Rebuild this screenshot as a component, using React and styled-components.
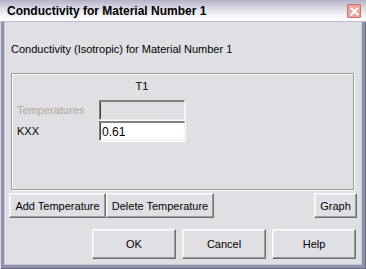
import React from 'react'
import styled, { createGlobalStyle } from 'styled-components'

const GlobalStyle = createGlobalStyle`
  html, body {
    margin: 0;
    padding: 0;
    background: #e0dfe3;
  }
  body {
    font-family: "Liberation Sans", Arial, sans-serif;
    font-size: 11px;
    color: #000;
  }
`

const Window = styled.div`
  width: 366px;
  height: 269px;
  box-sizing: border-box;
  display: flex;
  flex-direction: column;
  background: #9291ad;
  box-shadow: inset 1px 0 0 #d9d8e4, inset -1px -1px 0 #6b6a86;
`

const TitleBar = styled.div`
  height: 22px;
  flex: none;
  display: flex;
  align-items: center;
  justify-content: space-between;
  padding: 0 7px 0 7px;
  box-sizing: border-box;
  background: linear-gradient(#b3b2c8 0%, #d6d6e3 35%, #f3f3f8 70%, #ffffff 100%);
  border-bottom: 1px solid #bdbccf;
`

const Title = styled.span`
  font-weight: bold;
  font-size: 12px;
`

const CloseButton = styled.div`
  width: 14px;
  height: 14px;
  box-sizing: border-box;
  margin-right: -2px;
  margin-top: 1px;
  background: #eba49d;
  border: 1px solid #d0756c;
  border-radius: 1px;
  display: flex;
  align-items: center;
  justify-content: center;
`

const Content = styled.div`
  flex: 1;
  margin: 0 4px 4px;
  background: #e0dfe3;
  display: flex;
  flex-direction: column;
  padding: 20px 5px 0;
  box-shadow: inset 1px 0 0 #c9c8d6, inset -1px 0 0 #c9c8d6, inset 0 -1px 0 #c9c8d6;
`

const Description = styled.div`
  line-height: 14px;
  padding-left: 2px;
`

const GroupBox = styled.div`
  margin: 17px 3px 0 2px;
  height: 117px;
  box-sizing: border-box;
  border: 1px solid #9d9da1;
  box-shadow: inset 1px 1px 0 #fff, 1px 1px 0 #fff;
  padding: 5px 0 0 5px;
  display: grid;
  grid-template-columns: 82px 86px;
  grid-auto-rows: 20px;
  row-gap: 1px;
  align-content: start;
`

const ColumnHeader = styled.div`
  grid-column: 2;
  height: 16px;
  margin-bottom: 2px;
  text-align: center;
  line-height: 14px;
`

const RowLabel = styled.div`
  display: flex;
  align-items: center;
  color: ${p => (p.disabled ? '#aca899' : '#000')};
`

const Field = styled.div`
  box-sizing: border-box;
  height: 20px;
  display: flex;
  align-items: center;
  padding: 0 2px;
  background: ${p => (p.disabled ? '#e0dfe3' : '#fff')};
  border-top: 2px solid #808080;
  border-left: 1px solid #808080;
  border-right: 1px solid #f1efe2;
  border-bottom: 1px solid #f1efe2;
  box-shadow: inset 1px 0 0 #404040, 1px 1px 0 #fff;
  font-size: 12px;
`

const ButtonRow = styled.div`
  display: flex;
  margin-top: ${p => p.gap}px;
  justify-content: ${p => p.justify || 'flex-start'};
  gap: ${p => p.spacing || 0}px;
  padding-right: ${p => p.right || 0}px;
`

const Spacer = styled.div`
  flex: 1;
`

const Button = styled.button`
  box-sizing: border-box;
  width: ${p => p.w}px;
  height: ${p => p.h || 25}px;
  margin: 0;
  padding: 0;
  font-family: "Liberation Sans", Arial, sans-serif;
  font-size: 11px;
  color: #000;
  background: #e0dfe3;
  border-top: 1px solid #fff;
  border-left: 1px solid #fff;
  border-right: 1px solid #716f64;
  border-bottom: 1px solid #716f64;
  box-shadow: inset -1px -1px 0 #9d9da1, inset 1px 1px 0 #f1efe2;
  cursor: default;
`

const CloseIcon = () => (
  <svg width="9" height="9" viewBox="0 0 9 9">
    <path d="M1.5 1.5 L7.5 7.5 M7.5 1.5 L1.5 7.5" stroke="#fff" strokeWidth="2" strokeLinecap="square" />
  </svg>
)

export default function App() {
  return (
    <>
      <GlobalStyle />
      <Window>
        <TitleBar>
          <Title>Conductivity for Material Number 1</Title>
          <CloseButton>
            <CloseIcon />
          </CloseButton>
        </TitleBar>
        <Content>
          <Description>Conductivity (Isotropic) for Material Number 1</Description>
          <GroupBox>
            <ColumnHeader>T1</ColumnHeader>
            <RowLabel disabled>Temperatures</RowLabel>
            <Field disabled />
            <RowLabel>KXX</RowLabel>
            <Field>0.61</Field>
          </GroupBox>
          <ButtonRow gap={3}>
            <Button w={97}>Add Temperature</Button>
            <Button w={108}>Delete Temperature</Button>
            <Spacer />
            <Button w={43}>Graph</Button>
          </ButtonRow>
          <ButtonRow gap={11} justify="flex-end" spacing={6} right={1}>
            <Button w={84} h={30}>OK</Button>
            <Button w={84} h={30}>Cancel</Button>
            <Button w={84} h={30}>Help</Button>
          </ButtonRow>
        </Content>
      </Window>
    </>
  )
}
